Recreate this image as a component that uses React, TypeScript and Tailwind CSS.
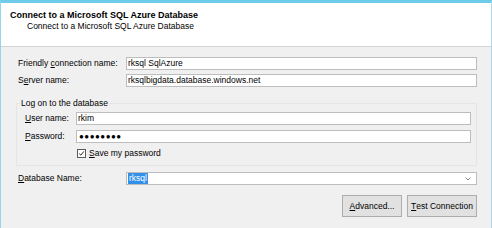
// Connect to a Microsoft SQL Azure Database — connection dialog page.

const FONT = { fontFamily: '"Liberation Sans", Arial, sans-serif' };

function Key({ children }: { children: string }): JSX.Element {
  return <span className="underline underline-offset-[1px]">{children}</span>;
}

function TextBox({ value }: { value: string }): JSX.Element {
  return (
    <div className="flex h-[13px] flex-1 items-center border border-[#bdbdbd] bg-white pl-[1px] text-[8.5px] leading-none text-black">
      {value}
    </div>
  );
}

function Row({
  label,
  labelWidth,
  children,
}: {
  label: JSX.Element;
  labelWidth: string;
  children: JSX.Element;
}): JSX.Element {
  return (
    <div className="flex h-[13px] items-center">
      <div className={`${labelWidth} shrink-0 text-[8.5px] leading-none text-black`}>{label}</div>
      {children}
    </div>
  );
}

export default function App(): JSX.Element {
  return (
    <div
      style={FONT}
      className="flex h-[228px] w-[492px] flex-col overflow-hidden border-t-[3px] border-l border-r border-t-[#6ecbe9] border-l-[#93d4ee] border-r-[#a6dcf0] bg-[#f0f0f0]"
    >
      <header className="h-[44px] shrink-0 border-b border-[#d4d4d4] bg-white pt-[7px]">
        <p className="pl-[9px] text-[9px] font-bold leading-[11px] text-black">
          Connect to a Microsoft SQL Azure Database
        </p>
        <p className="pl-[26px] text-[8.5px] leading-[11px] text-black">
          Connect to a Microsoft SQL Azure Database
        </p>
      </header>

      <div className="flex flex-col pl-[17px] pr-[14px] pt-[10px]">
        <Row
          labelWidth="w-[108px]"
          label={
            <>
              Friendly <Key>c</Key>onnection name:
            </>
          }
        >
          <TextBox value="rksql SqlAzure" />
        </Row>
        <div className="mt-[4px]">
          <Row
            labelWidth="w-[108px]"
            label={
              <>
                S<Key>e</Key>rver name:
              </>
            }
          >
            <TextBox value="rksqlbigdata.database.windows.net" />
          </Row>
        </div>
      </div>

      <fieldset className="ml-[15px] mr-[14px] mt-[11px] border border-[#e5e5e5] px-0 pb-[6px] pt-[3px]">
        <legend className="ml-[3px] px-[1px] text-[8.5px] leading-[11px] text-black">
          Log on to the database
        </legend>
        <div className="flex flex-col pl-[8px] pr-[5px]">
          <Row
            labelWidth="w-[51px]"
            label={
              <>
                <Key>U</Key>ser name:
              </>
            }
          >
            <TextBox value="rkim" />
          </Row>
          <div className="mt-[5px]">
            <Row
              labelWidth="w-[51px]"
              label={
                <>
                  <Key>P</Key>assword:
                </>
              }
            >
              <div className="flex h-[13px] flex-1 items-center border border-[#bdbdbd] bg-white pl-[2px] text-[8px] leading-none tracking-[0.5px] text-black">
                ●●●●●●●●
              </div>
            </Row>
          </div>
          <div className="mt-[5px] flex h-[11px] items-center pl-[52px]">
            <span className="flex h-[9px] w-[9px] items-center justify-center border border-[#5a5a5a] bg-white">
              <svg width="7" height="7" viewBox="0 0 7 7">
                <path d="M1.2 3.6 L2.9 5.2 L5.8 1.4" fill="none" stroke="#333333" strokeWidth="1" />
              </svg>
            </span>
            <span className="ml-[3px] text-[8.5px] leading-none text-black">
              <Key>S</Key>ave my password
            </span>
          </div>
        </div>
      </fieldset>

      <div className="flex flex-col pl-[17px] pr-[14px] pt-[6px]">
        <Row
          labelWidth="w-[108px]"
          label={
            <>
              <Key>D</Key>atabase Name:
            </>
          }
        >
          <div className="flex h-[13px] flex-1 items-center border border-[#bdbdbd] bg-white pl-[1px] pr-[5px] text-[8.5px] leading-none">
            <span className="bg-[#3390ea] px-[1px] py-[1px] text-white">rksql</span>
            <span className="flex-1" />
            <svg width="6" height="4" viewBox="0 0 6 4">
              <path d="M0.5 0.5 L3 3 L5.5 0.5" fill="none" stroke="#8a8a8a" strokeWidth="1" />
            </svg>
          </div>
        </Row>

        <div className="mt-[10px] flex justify-end gap-[5px]">
          <button className="flex h-[22px] w-[60px] items-center justify-center border border-[#adadad] bg-[#e1e1e1] text-[8.5px] leading-none text-black">
            <Key>A</Key>dvanced...
          </button>
          <button className="flex h-[22px] w-[70px] items-center justify-center border border-[#adadad] bg-[#e1e1e1] text-[8.5px] leading-none text-black">
            <Key>T</Key>est Connection
          </button>
        </div>
      </div>
    </div>
  );
}
